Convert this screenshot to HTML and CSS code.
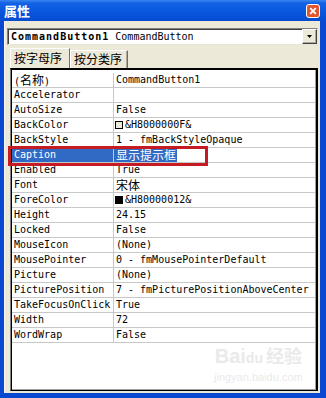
FILE: index.html
```html
<!DOCTYPE html>
<html lang="zh">
<head>
    <meta charset="UTF-8">
    <meta name="viewport" content="width=device-width, initial-scale=1.0">
    <title>属性</title>
    <link rel="stylesheet" href="styles.css">
</head>
<body>

<div class="window">
    <div class="titlebar">
        <span class="title">属性</span>
        <span class="close">
            <svg width="14" height="14" viewBox="0 0 14 14">
                <rect x="0.5" y="0.5" width="13" height="13" rx="2.5" fill="#E1562F" stroke="#FFFFFF"/>
                <path d="M4.2 4.2 L9.8 9.8 M9.8 4.2 L4.2 9.8" stroke="#FFFFFF" stroke-width="1.8"/>
            </svg>
        </span>
    </div>

    <div class="frame">
        <div class="combo">
            <span class="combo-text"><b>CommandButton1</b> CommandButton</span>
            <span class="drop">
                <svg width="7" height="4" viewBox="0 0 7 4"><path d="M1 0 H6 L3.5 3 Z" fill="#000"/></svg>
            </span>
        </div>

        <div class="tabs">
            <div class="tab active">按字母序</div>
            <div class="tab">按分类序</div>
        </div>

        <div class="grid">
            <div class="row"><div class="name">(<span class="cjk">名称</span>)</div><div class="value">CommandButton1</div></div>
            <div class="row"><div class="name">Accelerator</div><div class="value"></div></div>
            <div class="row"><div class="name">AutoSize</div><div class="value">False</div></div>
            <div class="row"><div class="name">BackColor</div><div class="value"><span class="swatch light"></span>&amp;H8000000F&amp;</div></div>
            <div class="row"><div class="name">BackStyle</div><div class="value">1 - fmBackStyleOpaque</div></div>
            <div class="row selected"><div class="name">Caption</div><div class="value"><span class="sel cjk">显示提示框</span></div></div>
            <div class="row"><div class="name">Enabled</div><div class="value">True</div></div>
            <div class="row"><div class="name">Font</div><div class="value"><span class="cjk">宋体</span></div></div>
            <div class="row"><div class="name">ForeColor</div><div class="value"><span class="swatch dark"></span>&amp;H80000012&amp;</div></div>
            <div class="row"><div class="name">Height</div><div class="value">24.15</div></div>
            <div class="row"><div class="name">Locked</div><div class="value">False</div></div>
            <div class="row"><div class="name">MouseIcon</div><div class="value">(None)</div></div>
            <div class="row"><div class="name">MousePointer</div><div class="value">0 - fmMousePointerDefault</div></div>
            <div class="row"><div class="name">Picture</div><div class="value">(None)</div></div>
            <div class="row"><div class="name">PicturePosition</div><div class="value">7 - fmPicturePositionAboveCenter</div></div>
            <div class="row"><div class="name">TakeFocusOnClick</div><div class="value">True</div></div>
            <div class="row"><div class="name">Width</div><div class="value">72</div></div>
            <div class="row"><div class="name">WordWrap</div><div class="value">False</div></div>
        </div>
    </div>

    <!-- annotation + watermark lie over the grid -->
    <div class="mark"></div>
    <div class="watermark">
        <div class="wm-logo">Bai<span class="wm-du">du</span><span class="cjk">经验</span></div>
        <div class="wm-url">jingyan.baidu.com</div>
    </div>
</div>

</body>
</html>
```

FILE: styles.css
```css
body {
    margin: 0;
    background: #fff;
}

.window {
    position: relative;
    width: 326px;
    height: 398px;
    display: flex;
    flex-direction: column;
    background: #0A48D2;
    font-family: "DejaVu Sans Mono", "Noto Sans CJK SC", monospace;
    font-size: 10px;
    color: #000;
}

.cjk {
    font-family: "Noto Sans CJK SC", sans-serif;
    font-size: 12px;
}

/* title bar */
.titlebar {
    height: 21px;
    display: flex;
    align-items: center;
    justify-content: space-between;
    padding: 0 6px 0 4px;
    background: linear-gradient(to bottom, #3A86F2 0px, #1462E4 3px, #0A58DE 50%, #064BD0 100%);
}

.title {
    font-family: "Noto Sans CJK SC", sans-serif;
    font-size: 13px;
    font-weight: bold;
    color: #fff;
    line-height: 21px;
}

.close {
    display: flex;
    margin-top: 1px;
}

/* client area */
.frame {
    flex: 1;
    margin: 0 6px 5px 4px;
    border-left: 1px solid #F8F7F2;
    background: #ECE9D8;
}

.combo {
    width: 311px;
    height: 17px;
    box-sizing: border-box;
    margin: 7px 0 0 2px;
    display: flex;
    align-items: center;
    padding-left: 3px;
    background: #fff;
    border: 1px solid;
    border-color: #808080 #E8E6DC #E8E6DC #808080;
    box-shadow: inset 1px 1px 0 #404040;
}

.combo-text {
    line-height: 15px;
    white-space: pre;
}

.combo-text b {
    letter-spacing: 1px;
}

.drop {
    margin-left: auto;
    width: 15px;
    height: 15px;
    box-sizing: border-box;
    display: flex;
    align-items: center;
    justify-content: center;
    background: #ECE9D8;
    border: 1px solid;
    border-color: #fff #404040 #404040 #fff;
    box-shadow: inset -1px -1px 0 #ACA899;
    padding-top: 1px;
}

/* tabs */
.tabs {
    height: 20px;
    margin: 3px 0 0 5px;
    display: flex;
    align-items: flex-end;
}

.tab {
    box-sizing: border-box;
    height: 18px;
    width: 58px;
    padding-left: 3px;
    font-family: "Noto Sans CJK SC", sans-serif;
    font-size: 12px;
    line-height: 16px;
    border-top: 1px solid #fff;
    border-left: 1px solid #fff;
    border-right: 1px solid #716F64;
    box-shadow: inset -1px 0 0 #ACA899;
}

.tab.active {
    height: 20px;
    width: 60px;
    line-height: 18px;
    box-shadow: none;
}

/* property grid */
.grid {
    width: 308px;
    height: 323px;
    box-sizing: border-box;
    margin-left: 5px;
    padding: 3px 1px 0 1px;
    background: #fff;
    border-style: solid;
    border-width: 2px 2px 1px 1px;
    border-color: #000 #000 #000 #808080;
    box-shadow: inset 1px 0 0 #000, inset -1px -1px 0 #A0A0A0;
}

.row {
    display: flex;
    height: 15px;
    box-sizing: border-box;
    border-bottom: 1px solid #C8C8C8;
    line-height: 14px;
    white-space: pre;
}

.name {
    width: 102px;
    box-sizing: border-box;
    padding-left: 2px;
    border-right: 1px solid #C8C8C8;
}

.value {
    flex: 1;
    padding-left: 2px;
    display: flex;
    align-items: center;
}

.row .cjk {
    line-height: 14px;
}

.selected .name {
    background: #316AC5;
    color: #fff;
}

.selected .value {
    padding-left: 0;
}

.sel {
    background: #316AC5;
    color: #fff;
    padding: 0 1px 0 2px;
}

.swatch {
    display: inline-block;
    width: 8px;
    height: 8px;
    border: 1px solid #000;
    box-sizing: border-box;
    margin: 0 2px 0 -1px;
}

.swatch.light {
    background: #ECE9D8;
}

.swatch.dark {
    background: #000;
}

/* red annotation box */
.mark {
    position: absolute;
    left: 8px;
    top: 146px;
    width: 200px;
    height: 20px;
    box-sizing: border-box;
    border: 3px solid #C51B23;
}

.watermark {
    position: absolute;
    left: 214px;
    top: 343px;
    color: #EAEAEA;
    font-family: "Liberation Sans", sans-serif;
    text-align: center;
}

.wm-logo {
    font-size: 20px;
    font-weight: bold;
    line-height: 24px;
}

.wm-du {
    font-size: 14px;
}

.wm-logo .cjk {
    font-size: 18px;
    margin-left: 3px;
}

.wm-url {
    font-size: 11px;
    line-height: 14px;
}
```
